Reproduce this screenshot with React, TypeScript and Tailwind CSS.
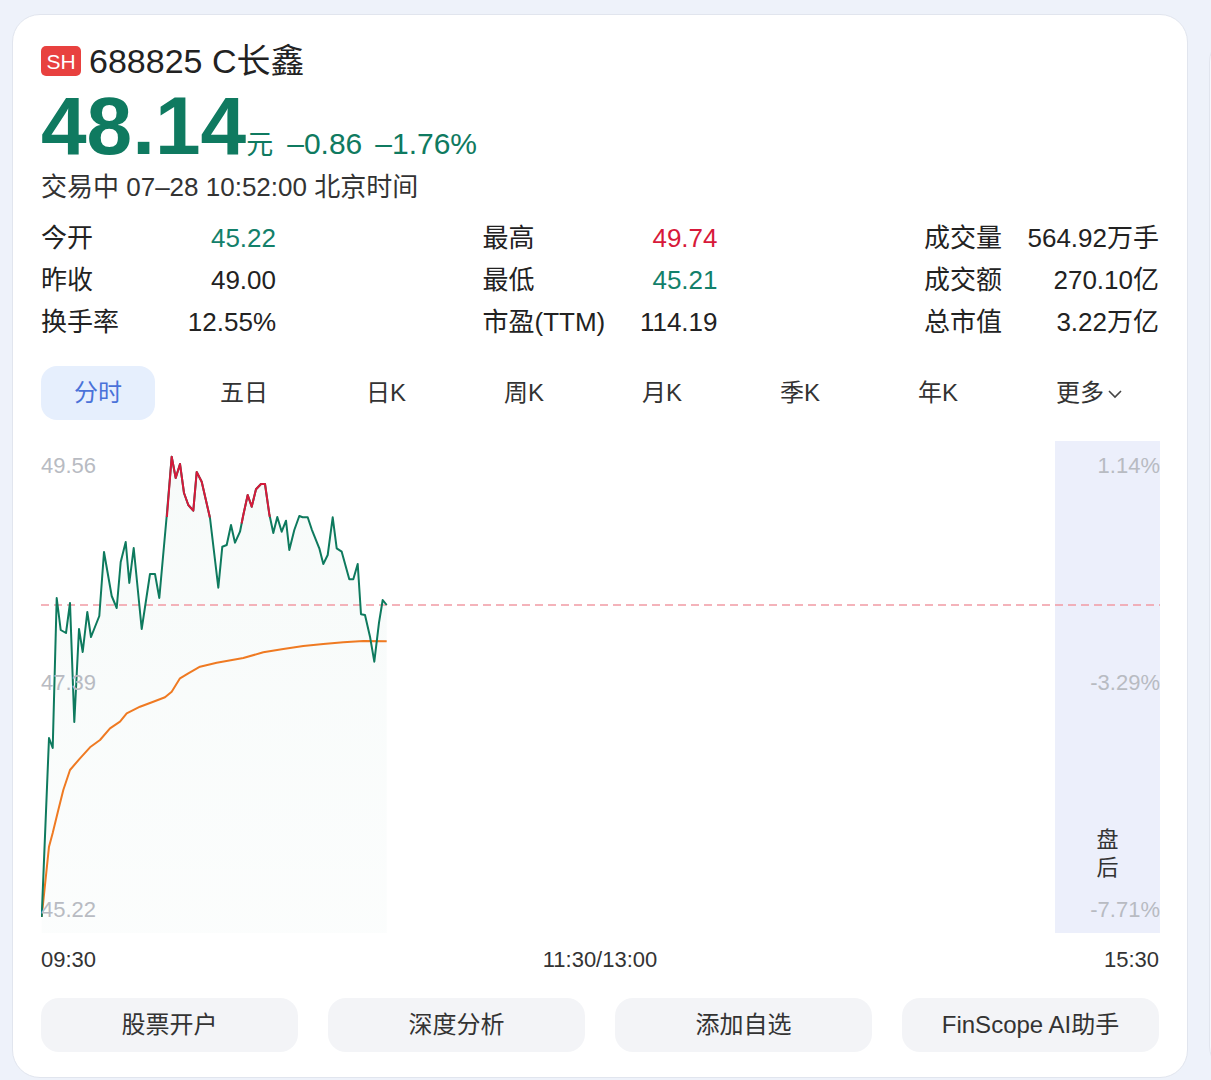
import React from "react";

const FONT = '"Liberation Sans", "Noto Sans CJK SC", sans-serif';

const pricePts: [number, number][] = [
  [41.7, 917], [49, 738], [52.7, 748], [56.7, 598], [60.7, 630], [66, 633], [70, 603], [74.3, 722],
  [79, 629], [82.7, 652], [87.3, 612], [91, 637], [99.3, 616], [104, 552], [111.7, 596], [116.7, 608],
  [120.7, 562], [125.7, 542], [129.3, 583], [133.7, 548], [141.7, 629], [150, 574], [155, 574],
  [159.3, 598], [166.7, 516], [171.7, 456.7], [175.7, 478], [180, 464], [184, 493], [188.3, 505],
  [193.3, 510.7], [196.7, 472], [201.7, 481.7], [210, 518], [218.3, 587.7], [222.3, 546.7],
  [226.7, 545], [231, 525], [235, 542.7], [240, 531.7], [243.3, 515], [247.7, 495], [251.7, 506.7],
  [256, 489.3], [261, 484], [265, 484], [269.3, 514], [273.3, 533], [277.3, 517], [281.7, 531.7],
  [286, 520.7], [289.3, 550], [294.3, 530], [299.3, 516], [302.7, 517.3], [307.7, 517.3],
  [311.7, 529.3], [319.3, 548.3], [323.3, 564], [327.7, 555], [332.7, 517.3], [336.7, 548.3],
  [341.7, 551.7], [349.3, 579.3], [353.3, 579.3], [357.7, 564], [361, 614.3], [365, 615],
  [370, 636.7], [374.3, 661.7], [379, 622.7], [382.7, 600], [386.7, 605],
];

const red1: [number, number][] = [
  [166.9, 517], [171.7, 456.7], [175.7, 478], [180, 464], [184, 493], [188.3, 505], [193.3, 510.7],
  [196.7, 472], [201.7, 481.7], [209.9, 517.5],
];
const red2: [number, number][] = [
  [241.6, 523.5], [243.3, 515], [247.7, 495], [251.7, 506.7], [256, 489.3], [261, 484], [265, 484],
  [269.3, 514], [269.8, 517],
];

const avgPts: [number, number][] = [
  [41.7, 916.7], [49, 846.7], [52.7, 833], [58.3, 810], [63.3, 790], [70, 770], [80, 758.3],
  [90, 747.3], [100, 740], [110, 728.3], [120, 721.7], [126.7, 713.3], [140, 706.7], [153.3, 701.7],
  [165, 697.3], [171.7, 691.7], [180, 678.3], [188.3, 673.3], [200, 666.7], [216.7, 662.7],
  [243.3, 658], [263.3, 652.3], [283.3, 649], [303.3, 646], [323.3, 644], [343.3, 642.3],
  [363.3, 641], [386.7, 641.3],
];

const toStr = (p: [number, number][]) => p.map(([x, y]) => `${x},${y}`).join(" ");

function Stat({ label, value, color }: { label: string; value: string; color: string }) {
  return (
    <div className="flex h-[42px] w-[235px] items-center justify-between whitespace-nowrap">
      <span className="text-[26px] text-[#222]">{label}</span>
      <span className={`text-[26px] ${color}`}>{value}</span>
    </div>
  );
}

const tabs = ["分时", "五日", "日K", "周K", "月K", "季K", "年K"];

export default function App() {
  const fill = `${toStr(pricePts)} 386.7,933 41.7,933`;
  return (
    <div
      className="flex h-[1080px] w-[1211px] overflow-hidden bg-[#eef2fa] pl-[12px] pt-[14px]"
      style={{ fontFamily: FONT }}
    >
      <div className="flex h-[1064px] w-[1176px] shrink-0 flex-col rounded-[28px] border border-[#e1e5ee] bg-white px-[28px] pt-[26px]">
        {/* Title */}
        <div className="flex h-[40px] items-center">
          <span className="flex h-[30px] w-[40px] items-center justify-center rounded-[5px] bg-[#e8413f] text-[21px] leading-none text-white">
            SH
          </span>
          <span className="ml-[8px] text-[34px] leading-none text-[#222]">688825 C长鑫</span>
        </div>
        {/* Price */}
        <div className="mt-[4px] flex h-[82px] items-baseline whitespace-nowrap text-[#0f7a60]">
          <span className="text-[82px] font-bold leading-[82px]">48.14</span>
          <span className="text-[27px] leading-none">元</span>
          <span className="ml-[14px] text-[30px] leading-none">–0.86</span>
          <span className="ml-[13px] text-[30px] leading-none">–1.76%</span>
        </div>
        <div className="mt-[2px] flex h-[36px] items-center whitespace-nowrap text-[26px] text-[#333]">
          交易中 07–28 10:52:00 北京时间
        </div>
        {/* Stats */}
        <div className="mt-[12px] flex justify-between">
          <div className="flex flex-col">
            <Stat label="今开" value="45.22" color="text-[#13806a]" />
            <Stat label="昨收" value="49.00" color="text-[#222]" />
            <Stat label="换手率" value="12.55%" color="text-[#222]" />
          </div>
          <div className="flex flex-col">
            <Stat label="最高" value="49.74" color="text-[#d7193a]" />
            <Stat label="最低" value="45.21" color="text-[#13806a]" />
            <Stat label="市盈(TTM)" value="114.19" color="text-[#222]" />
          </div>
          <div className="flex flex-col">
            <Stat label="成交量" value="564.92万手" color="text-[#222]" />
            <Stat label="成交额" value="270.10亿" color="text-[#222]" />
            <Stat label="总市值" value="3.22万亿" color="text-[#222]" />
          </div>
        </div>
        {/* Tabs */}
        <div className="mt-[23px] flex h-[54px] items-center gap-[32px] whitespace-nowrap">
          {tabs.map((t, i) => (
            <div
              key={t}
              className={
                i === 0
                  ? "flex h-[54px] shrink-0 items-center rounded-[16px] bg-[#e6effd] px-[33px] text-[24px] text-[#4a72d9]"
                  : "flex h-[54px] shrink-0 items-center px-[33px] text-[24px] text-[#333]"
              }
            >
              {t}
            </div>
          ))}
          <div className="flex h-[54px] shrink-0 items-center pl-[33px] text-[24px] text-[#333]">
            更多
            <svg width="18" height="12" viewBox="0 0 18 12" className="ml-[2px] mt-[2px]">
              <polyline points="3,3 9,9 15,3" fill="none" stroke="#444" strokeWidth="1.6" />
            </svg>
          </div>
        </div>
        {/* Chart */}
        <div className="relative mt-[21px] h-[492px] w-[1119px]">
          <div className="absolute right-0 top-0 h-[492px] w-[105px] bg-[#eceffb]" />
          <svg
            className="absolute left-0 top-0"
            width="1119"
            height="492"
            viewBox="41 441 1119 492"
          >
            <defs>
              <linearGradient id="gfill" x1="0" y1="0" x2="0" y2="1">
                <stop offset="0%" stopColor="#0f7a60" stopOpacity="0.035" />
                <stop offset="100%" stopColor="#0f7a60" stopOpacity="0.015" />
              </linearGradient>
            </defs>
            <polygon points={fill} fill="url(#gfill)" />
            <line x1="41" y1="605" x2="1160" y2="605" stroke="#f19aa4" strokeWidth="1.5" strokeDasharray="8 5" />
            <polyline points={toStr(avgPts)} fill="none" stroke="#ef7a22" strokeWidth="2" strokeLinejoin="round" />
            <polyline points={toStr(pricePts)} fill="none" stroke="#0e7a5e" strokeWidth="2" strokeLinejoin="round" />
            <polyline points={toStr(red1)} fill="none" stroke="#d7193a" strokeWidth="2" strokeLinejoin="round" />
            <polyline points={toStr(red2)} fill="none" stroke="#d7193a" strokeWidth="2" strokeLinejoin="round" />
          </svg>
          <span className="absolute left-0 top-[12px] text-[22px] leading-[26px] text-[#b8bbc2]">49.56</span>
          <span className="absolute left-0 top-[229px] text-[22px] leading-[26px] text-[#b8bbc2]">47.39</span>
          <span className="absolute left-0 top-[456px] text-[22px] leading-[26px] text-[#b8bbc2]">45.22</span>
          <span className="absolute right-0 top-[12px] text-[22px] leading-[26px] text-[#b8bbc2]">1.14%</span>
          <span className="absolute right-0 top-[229px] text-[22px] leading-[26px] text-[#b8bbc2]">-3.29%</span>
          <span className="absolute right-0 top-[456px] text-[22px] leading-[26px] text-[#b8bbc2]">-7.71%</span>
          <div className="absolute right-0 top-[385px] flex w-[105px] flex-col items-center text-[22px] leading-[28px] text-[#333]">
            <span>盘</span>
            <span>后</span>
          </div>
        </div>
        {/* Times */}
        <div className="mt-[12px] flex h-[28px] items-center justify-between text-[22px] text-[#333]">
          <span>09:30</span>
          <span>11:30/13:00</span>
          <span>15:30</span>
        </div>
        {/* Buttons */}
        <div className="mt-[25px] grid grid-cols-4 gap-[30px]">
          {["股票开户", "深度分析", "添加自选", "FinScope AI助手"].map((b) => (
            <div
              key={b}
              className="flex h-[54px] items-center justify-center whitespace-nowrap rounded-[18px] bg-[#f3f4f7] text-[24px] text-[#333]"
            >
              {b}
            </div>
          ))}
        </div>
      </div>
      <div className="ml-[21px] mt-[20px] h-[1040px] w-[200px] shrink-0 rounded-[28px] border border-[#e1e5ee] bg-[#f6f8fd]" />
    </div>
  );
}
